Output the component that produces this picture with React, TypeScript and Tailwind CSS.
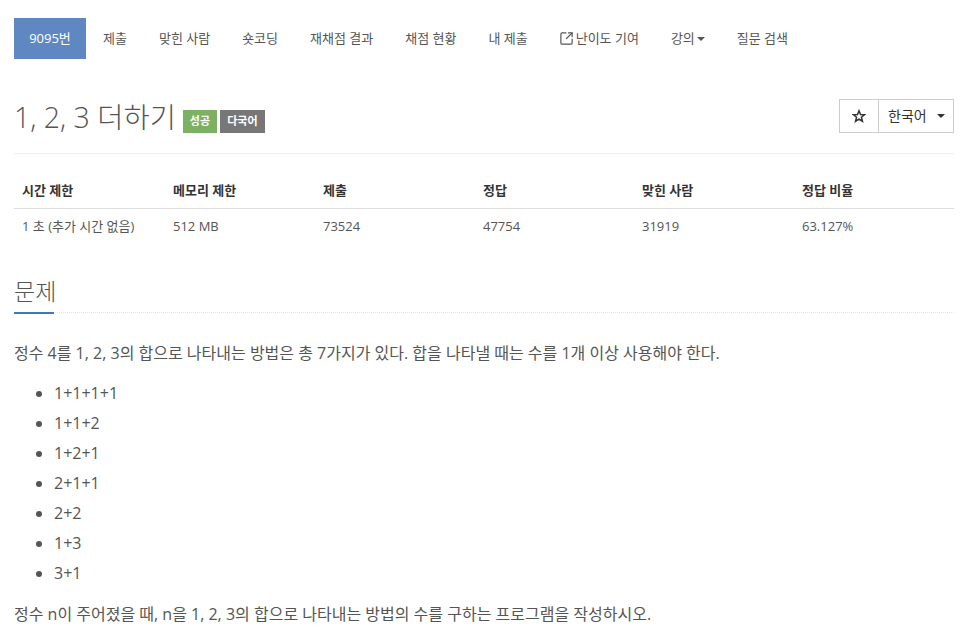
import { SquareArrowOutUpRight } from 'lucide-react';

const navItems = ['제출', '맞힌 사람', '숏코딩', '재채점 결과', '채점 현황', '내 제출'];

const columns = [
    { label: '시간 제한', value: '1 초 (추가 시간 없음)', width: 'w-[151px]' },
    { label: '메모리 제한', value: '512 MB', width: 'w-[150px]' },
    { label: '제출', value: '73524', width: 'w-[160px]' },
    { label: '정답', value: '47754', width: 'w-[159px]' },
    { label: '맞힌 사람', value: '31919', width: 'w-[160px]' },
    { label: '정답 비율', value: '63.127%', width: 'w-[160px]' },
];

const sums = ['1+1+1+1', '1+1+2', '1+2+1', '2+1+1', '2+2', '1+3', '3+1'];

function Caret() {
    return <span className="inline-block w-0 h-0 border-x-4 border-x-transparent border-t-4 border-t-[#555]" />;
}

export default function App() {
    return (
        <div className="h-[635px] overflow-hidden bg-white pl-[14px] pr-[18px] pt-[18px] text-[#555] font-['Open_Sans','Noto_Sans_CJK_KR',sans-serif] text-[14px]">
            {/* problem menu */}
            <ul className="flex h-[41px] items-center text-[13px]">
                <li className="mr-px flex h-full w-[72px] items-center justify-center bg-[#5f88c3] text-white">9095번</li>
                {navItems.map((item) => (
                    <li key={item} className="px-4">{item}</li>
                ))}
                <li className="flex items-center gap-[2px] pl-[15px] pr-4">
                    <SquareArrowOutUpRight size={15} strokeWidth={1.9} />
                    난이도 기여
                </li>
                <li className="flex items-center gap-[2px] px-4">
                    강의
                    <Caret />
                </li>
                <li className="px-4">질문 검색</li>
            </ul>

            {/* title */}
            <div className="mt-10 flex h-[55px] items-start justify-between border-b border-[#eee]">
                <div className="flex items-start">
                    <h1 className="text-[28.5px] font-light leading-[36px]">1, 2, 3 더하기</h1>
                    <span className="ml-[7px] mt-[11px] flex h-[23px] w-[34px] items-center justify-center bg-[#7cb062] text-[11px] font-bold text-white">성공</span>
                    <span className="ml-[3px] mt-[11px] flex h-[23px] w-[45px] items-center justify-center bg-[#777] text-[11px] font-bold text-white">다국어</span>
                </div>
                <div className="flex h-[34px] w-[115px] border border-[#ccc] text-[#333]">
                    <div className="flex w-[39px] items-center justify-center border-r border-[#ccc]">
                        <svg width="14" height="14" viewBox="0 0 24 24" fill="none" stroke="#333" strokeWidth="2.6" strokeLinejoin="miter">
                            <polygon points="12,3 14.6,9.3 21.5,9.8 16.2,14.2 17.9,21 12,17.3 6.1,21 7.8,14.2 2.5,9.8 9.4,9.3" />
                        </svg>
                    </div>
                    <div className="flex flex-1 items-center justify-between pl-[9px] pr-2">
                        <span className="-translate-y-px">한국어</span>
                        <span className="inline-block w-0 h-0 border-x-4 border-x-transparent border-t-4 border-t-[#333]" />
                    </div>
                </div>
            </div>

            {/* stats */}
            <div className="mt-[19px] flex text-[13px]">
                {columns.map((col) => (
                    <div key={col.label} className={col.width}>
                        <div className="flex h-[36px] items-center border-b border-[#ddd] px-2 font-bold text-[#333]">{col.label}</div>
                        <div className="flex h-[36px] items-center px-2">{col.value}</div>
                    </div>
                ))}
            </div>

            {/* description */}
            <div className="mt-[31px] flex h-[37px] items-start border-b border-dotted border-[#e5e5e5]">
                <h2 className="h-[38px] w-[40px] border-b-2 border-[#4375b9] text-[23px] leading-[30px] font-light whitespace-nowrap">문제</h2>
            </div>
            <p className="mt-[30px] text-[16px] leading-[20px]">정수 4를 1, 2, 3의 합으로 나타내는 방법은 총 7가지가 있다. 합을 나타낼 때는 수를 1개 이상 사용해야 한다.</p>
            <ul className="mt-[15px] list-disc pl-10 text-[16px]">
                {sums.map((sum, i) => (
                    <li key={i} className="h-[30px] leading-[30px] marker:text-[#555]">{sum}</li>
                ))}
            </ul>
            <p className="mt-4 text-[16px] leading-[20px]">정수 n이 주어졌을 때, n을 1, 2, 3의 합으로 나타내는 방법의 수를 구하는 프로그램을 작성하시오.</p>
        </div>
    );
}
